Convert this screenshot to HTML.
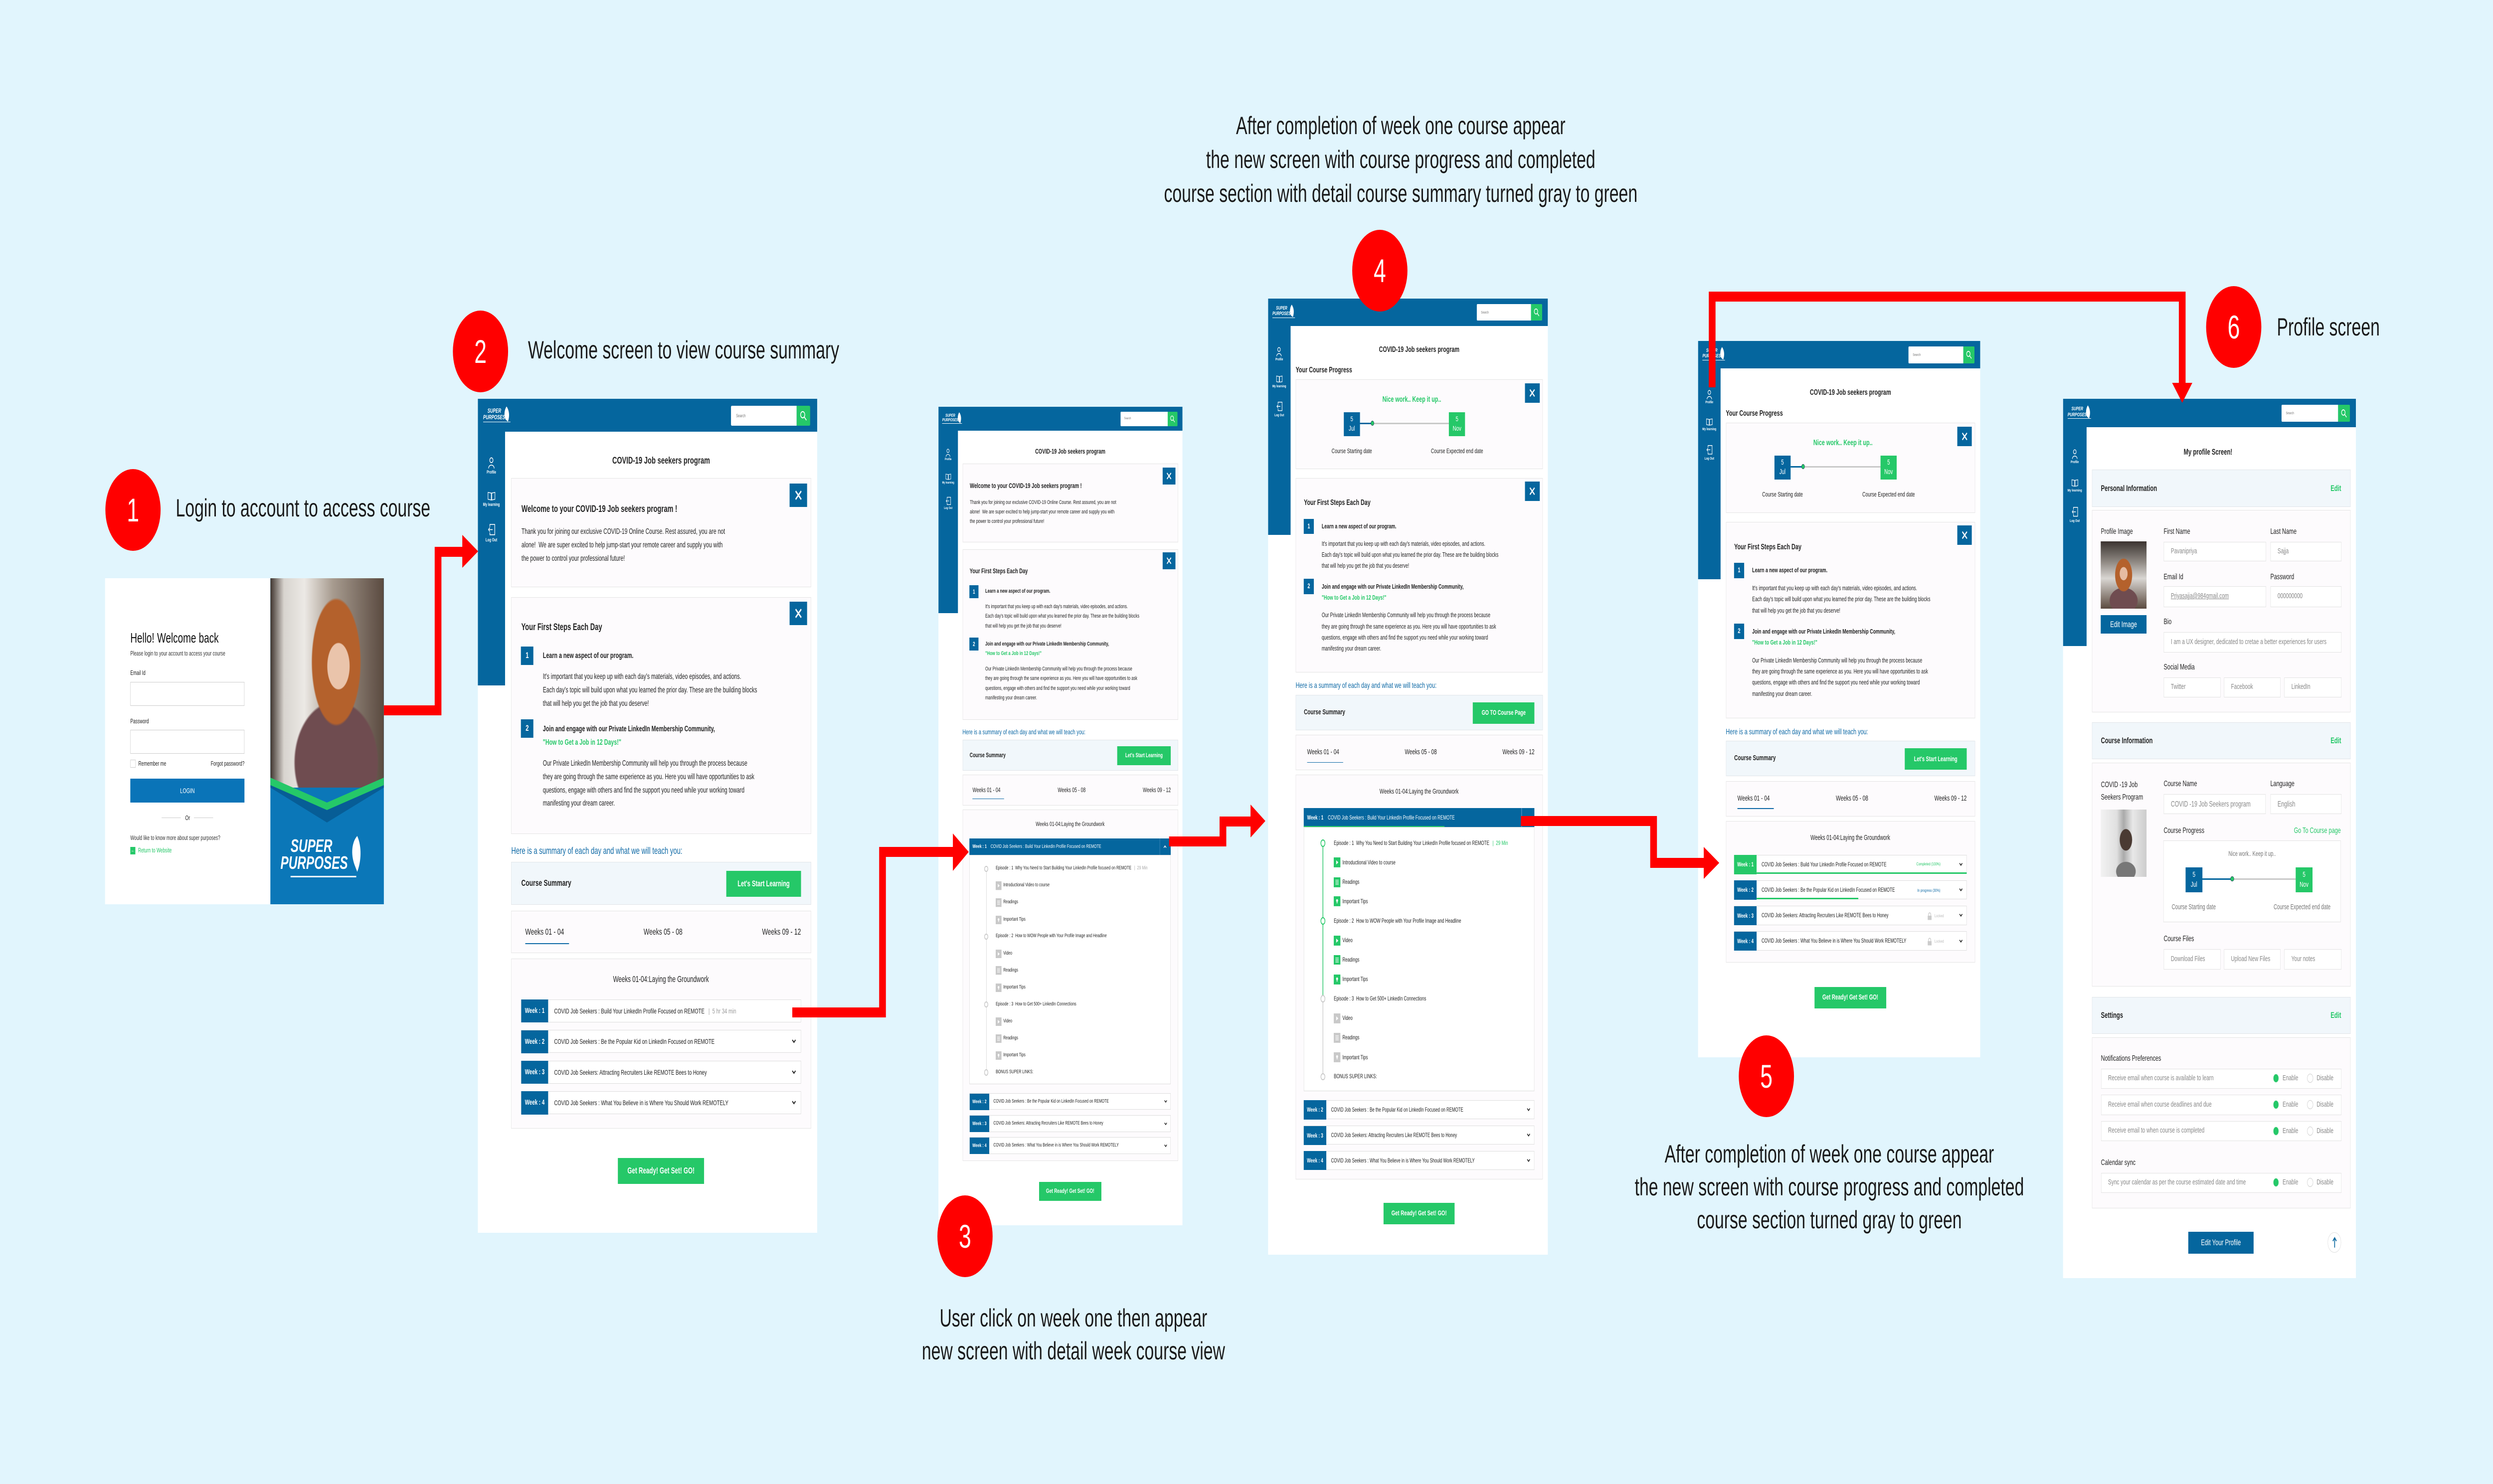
<!DOCTYPE html>
<html><head><meta charset="utf-8">
<style>
html,body{margin:0;padding:0;width:100%;height:100%;overflow:hidden;background:#e1f5fd}
body{font-family:"Liberation Sans",sans-serif;color:#222}
#wrap{position:absolute;left:0;top:0;width:7404px;height:2977px;overflow:hidden;background:#e1f5fd;transform-origin:0 0}
.a{position:absolute;white-space:nowrap}
.pos{position:absolute;overflow:hidden}
.scr{position:relative;width:1460px;background:#fff;overflow:hidden}
.hdr{position:absolute;left:0;top:0;width:1460px;height:96px;background:#05669e}
.side{position:absolute;left:0;top:96px;width:117px;height:737px;background:#05669e}
.lb{position:absolute;left:0;width:117px;text-align:center;color:#fff;font-size:13px;font-weight:bold}
.srch{position:absolute;left:1089px;top:20px;width:283px;height:58px;background:#fff;border-radius:4px 0 0 4px;font-size:13px;color:#777;line-height:58px;padding-left:22px;box-sizing:border-box}
.sbtn{position:absolute;left:1372px;top:20px;width:58px;height:58px;background:#25c868;border-radius:0 4px 4px 0}
.card{position:absolute;left:144px;width:1290px;border:2px solid #e4e4e4;background:#fdfbfd;box-sizing:border-box}
.bar{position:absolute;left:144px;width:1290px;border:2px solid #e0e4e8;background:#f1f7fb;box-sizing:border-box}
.x{position:absolute;left:1341px;width:76px;height:68px;background:#05669e}
.ttl{font-size:28px;font-weight:bold;line-height:40px;color:#222}
.h{font-size:23px;font-weight:bold;line-height:40px}
.p{font-size:22.5px;line-height:39px;color:#222}
.bx{position:absolute;left:186px;width:53px;height:53px;background:#05669e;color:#fff;font-size:24px;line-height:53px;text-align:center;font-weight:bold}
.gbtn{position:absolute;background:#25c868;color:#fff;font-weight:bold;text-align:center}
.bbtn{position:absolute;background:#05669e;color:#fff;text-align:center}
.row{position:absolute;left:186px;width:1204px;height:67px;background:#fff;border:1px solid #ddd;box-sizing:border-box}
.wl{position:absolute;left:-1px;top:-1px;width:117px;height:67px;background:#05669e;color:#fff;font-weight:bold;font-size:21px;line-height:67px;text-align:center}
.rt{position:absolute;left:141px;top:0;line-height:65px;font-size:20.5px;white-space:nowrap;color:#222}
.chev{position:absolute;left:1162px;top:25px}
.tab{font-size:26px;line-height:40px;color:#222}
.it{position:absolute;font-size:21px;line-height:30px;white-space:nowrap;color:#222}
.ic{position:absolute;left:343px}
.dot{position:absolute;left:274px;width:25px;height:25px;border-radius:50%;background:#fff;box-sizing:border-box}
.lbl{font-size:27px;line-height:36px;color:#222}
.inp{position:absolute;border:2px solid #e2e2e2;background:#fff;box-sizing:border-box;font-size:25px;color:#888;padding-left:34px;white-space:nowrap;overflow:hidden}
.ann{position:absolute;font-size:50px;line-height:60px;color:#1a1a1a;white-space:nowrap}
.circ{position:absolute;z-index:6;width:164px;height:164px;border-radius:50%;background:#ff0000;color:#fff;font-size:66px;line-height:164px;text-align:center}
</style></head><body><div id="wrap">

<div class="ann" style="left:522px;top:989px">Login to account to access course</div>
<div class="ann" style="left:1568px;top:672px">Welcome screen to view course summary</div>
<div class="ann" style="left:2588px;width:1200px;text-align:center;top:2614px">User click on week one then appear</div>
<div class="ann" style="left:2588px;width:1200px;text-align:center;top:2680px">new screen with detail week course view</div>
<div class="ann" style="left:3360px;width:1600px;text-align:center;top:222px">After completion of week one course appear</div>
<div class="ann" style="left:3360px;width:1600px;text-align:center;top:290px">the new screen with course progress and completed</div>
<div class="ann" style="left:3360px;width:1600px;text-align:center;top:358px">course section with detail course summary turned gray to green</div>
<div class="ann" style="left:4733px;width:1400px;text-align:center;top:2285px">After completion of week one course appear</div>
<div class="ann" style="left:4733px;width:1400px;text-align:center;top:2351px">the new screen with course progress and completed</div>
<div class="ann" style="left:4733px;width:1400px;text-align:center;top:2417px">course section turned gray to green</div>
<div class="ann" style="left:6762px;top:626px">Profile screen</div>

<!-- LOGIN CARD -->
<div class="a" style="left:312px;top:1160px;width:491px;height:654px;background:#fff"></div>
<div class="a" style="left:387px;top:1262px;font-size:28px;line-height:36px;color:#111">Hello! Welcome back</div>
<div class="a" style="left:387px;top:1303px;font-size:12.5px;line-height:16px;color:#333">Please login to your account to access your course</div>
<div class="a" style="left:387px;top:1342px;font-size:12.5px;line-height:16px;color:#222">Email Id</div>
<div class="a" style="left:387px;top:1368px;width:339px;height:48px;border:1px solid #ccc;box-sizing:border-box"></div>
<div class="a" style="left:387px;top:1439px;font-size:12.5px;line-height:16px;color:#222">Password</div>
<div class="a" style="left:387px;top:1464px;width:339px;height:48px;border:1px solid #ccc;box-sizing:border-box"></div>
<div class="a" style="left:387px;top:1524px;width:16px;height:16px;border:1px solid #ccc;box-sizing:border-box"></div>
<div class="a" style="left:411px;top:1524px;font-size:12.5px;line-height:16px">Remember me</div>
<div class="a" style="left:600px;width:126px;text-align:right;top:1524px;font-size:12.5px;line-height:16px">Forgot password?</div>
<div class="a" style="left:387px;top:1562px;width:339px;height:48px;background:#0a74b8;color:#fff;font-size:14px;line-height:48px;text-align:center">LOGIN</div>
<div class="a" style="left:480px;top:1640px;width:57px;height:1px;background:#ccc"></div>
<div class="a" style="left:576px;top:1640px;width:57px;height:1px;background:#ccc"></div>
<div class="a" style="left:550px;top:1633px;font-size:13px;line-height:16px">Or</div>
<div class="a" style="left:387px;top:1673px;font-size:12.5px;line-height:16px;color:#333">Would like to know more about super purposes?</div>
<div class="a" style="left:387px;top:1699px;width:15px;height:15px;background:#25c868;color:#fff;font-size:11px;line-height:15px;text-align:center">&#8592;</div>
<div class="a" style="left:410px;top:1698px;font-size:12.5px;line-height:16px;color:#25c868">Return to Website</div>
<div class="a" style="left:803px;top:1160px;width:337px;height:654px;overflow:hidden;background:#0b77b8">
 <div class="a" style="left:0;top:0;width:337px;height:420px;background:radial-gradient(ellipse 16% 18% at 60% 42%,#eac4ab 0 60%,transparent 63%),radial-gradient(ellipse 30% 42% at 58% 40%,#b4612c 0 70%,transparent 73%),radial-gradient(ellipse 48% 38% at 58% 88%,#6f4c50 0 75%,transparent 78%),linear-gradient(90deg,#3e342e,#d8d4cf 12%,#ece9e5 30%,#a79b8f 55%,#5a4a40 100%)"></div>
 <svg class="a" style="left:0;top:390px" width="337" height="100"><polygon points="0,30 168,100 337,30 337,0 337,10 168,75 0,10" fill="#075d96"/><polygon points="0,10 168,60 337,10 337,25 168,75 0,25" fill="#25c868"/></svg>
 <div class="a" style="left:30px;top:520px;color:#fff;font-weight:bold;font-size:36px;line-height:34px;font-style:italic">&nbsp;&nbsp;&nbsp;SUPER<br>PURPOSES</div>
 <svg class="a" style="left:228px;top:515px" width="50" height="80"><path d="M30 2 C14 14 10 38 22 60 L30 74 C42 52 44 24 30 2Z" fill="#fff"/></svg>
 <div class="a" style="left:60px;top:597px;width:195px;height:3px;background:#fff"></div>
</div>

<!-- ========== SCREEN 2 ========== -->
<div class="pos" style="left:1419px;top:800px;width:1008px;height:1673px">
<div class="scr" style="zoom:0.6904;height:2423px">
 <div class="hdr"></div>
 <div class="a" style="left:23px;top:26px;color:#fff;font:italic bold 17px/19px 'Liberation Sans',sans-serif">&nbsp;&nbsp;&nbsp;&nbsp;SUPER<br>PURPOSES</div>
 <svg class="a" style="left:106px;top:20px" width="34" height="48"><path d="M18 2 C8 12 6 30 14 40 L24 46 C32 30 30 14 18 2Z" fill="#fff"/></svg>
 <div class="a" style="left:23px;top:66px;width:117px;height:2px;background:#fff"></div>
 <div class="srch">Search</div><div class="sbtn"><svg width="58" height="58"><circle cx="26" cy="26" r="9" stroke="#fff" stroke-width="3" fill="none"/><path d="M33 33 L42 42" stroke="#fff" stroke-width="3"/></svg></div>
 <div class="side">
  <svg class="a" style="left:43px;top:74px" width="30" height="34"><circle cx="15" cy="9" r="7" stroke="#fff" stroke-width="2.5" fill="none"/><path d="M3 33 C3 20 27 20 27 33" stroke="#fff" stroke-width="2.5" fill="none"/></svg>
  <div class="lb" style="top:109px">Profile</div>
  <svg class="a" style="left:42px;top:172px" width="34" height="28"><path d="M2 4 L16 6 L16 26 L2 24Z M32 4 L18 6 L18 26 L32 24Z" stroke="#fff" stroke-width="2.2" fill="none"/></svg>
  <div class="lb" style="top:204px">My learning</div>
  <svg class="a" style="left:42px;top:266px" width="34" height="36"><path d="M10 10 V3 H31 V33 H10 V26" stroke="#fff" stroke-width="2.5" fill="none"/><path d="M22 18 H4 M10 12 L4 18 L10 24" stroke="#fff" stroke-width="2.5" fill="none"/></svg>
  <div class="lb" style="top:307px">Log Out</div>
 </div>
 <div class="a ttl" style="left:117px;width:1343px;text-align:center;top:161px">COVID-19 Job seekers program</div>
 <div class="card" style="top:230px;height:317px"></div>
 <div class="x" style="top:246px"><svg width="76" height="68"><path d="M26 22 L50 46 M50 22 L26 46" stroke="#fff" stroke-width="5"/></svg></div>
 <div class="a ttl" style="left:188px;top:301px">Welcome to your COVID-19 Job seekers program !</div>
 <div class="a p" style="left:188px;top:368px">Thank you for joining our exclusive COVID-19 Online Course. Rest assured, you are not<br>alone!&nbsp; We are super excited to help jump-start your remote career and supply you with<br>the power to control your professional future!</div>
 <div class="card" style="top:576px;height:689px"></div>
 <div class="x" style="top:589px"><svg width="76" height="68"><path d="M26 22 L50 46 M50 22 L26 46" stroke="#fff" stroke-width="5"/></svg></div>
 <div class="a ttl" style="left:187px;top:645px">Your First Steps Each Day</div>
 <div class="bx" style="top:720px">1</div>
 <div class="a h" style="left:280px;top:727px">Learn a new aspect of our program.</div>
 <div class="a p" style="left:280px;top:789px">It's important that you keep up with each day's materials, video episodes, and actions.<br>Each day's topic will build upon what you learned the prior day. These are the building blocks<br>that will help you get the job that you deserve!</div>
 <div class="bx" style="top:932px">2</div>
 <div class="a h" style="left:280px;top:940px">Join and engage with our Private LinkedIn Membership Community,</div>
 <div class="a h" style="left:280px;top:979px;color:#25c868">"How to Get a Job in 12 Days!"</div>
 <div class="a p" style="left:280px;top:1041px">Our Private LinkedIn Membership Community will help you through the process because<br>they are going through the same experience as you. Here you will have opportunities to ask<br>questions, engage with others and find the support you need while your working toward<br>manifesting your dream career.</div>
 <div class="a" style="left:144px;top:1295px;font-size:28px;line-height:40px;color:#0f6aa6">Here is a summary of each day and what we will teach you:</div>
 <div class="bar" style="top:1346px;height:124px"></div>
 <div class="a ttl" style="left:187px;top:1388px;font-size:26px">Course Summary</div>
 <div class="gbtn" style="left:1069px;top:1372px;width:321px;height:75px;line-height:75px;font-size:24px">Let's Start Learning</div>
 <div class="card" style="top:1487px;height:124px"></div>
 <div class="a tab" style="left:204px;top:1529px">Weeks 01 - 04</div>
 <div class="a" style="left:204px;top:1582px;width:188px;height:3px;background:#0f6aa6"></div>
 <div class="a tab" style="left:597px;width:400px;text-align:center;top:1529px">Weeks 05 - 08</div>
 <div class="a tab" style="left:1090px;width:300px;text-align:right;top:1529px">Weeks 09 - 12</div>
 <div class="card" style="top:1627px;height:494px"></div>
 <div class="a" style="left:288px;width:1000px;text-align:center;top:1669px;font-size:25px;line-height:36px">Weeks 01-04:Laying the Groundwork</div>
 <div class="row" style="top:1745px"><div class="wl">Week : 1</div><div class="rt">COVID Job Seekers : Build Your LinkedIn Profile Focused on REMOTE <span style="color:#999">&nbsp;&nbsp;|&nbsp;&nbsp;5 hr 34 min</span></div></div>
 <div class="row" style="top:1834px"><div class="wl">Week : 2</div><div class="rt">COVID Job Seekers : Be the Popular Kid on LinkedIn Focused on REMOTE</div><svg class="chev" width="20" height="14"><path d="M3 3 L10 10 L17 3" stroke="#222" stroke-width="3.5" fill="none"/></svg></div>
 <div class="row" style="top:1923px"><div class="wl">Week : 3</div><div class="rt">COVID Job Seekers: Attracting Recruiters Like REMOTE Bees to Honey</div><svg class="chev" width="20" height="14"><path d="M3 3 L10 10 L17 3" stroke="#222" stroke-width="3.5" fill="none"/></svg></div>
 <div class="row" style="top:2012px"><div class="wl">Week : 4</div><div class="rt">COVID Job Seekers : What You Believe in is Where You Should Work REMOTELY</div><svg class="chev" width="20" height="14"><path d="M3 3 L10 10 L17 3" stroke="#222" stroke-width="3.5" fill="none"/></svg></div>
 <div class="gbtn" style="left:602px;top:2206px;width:372px;height:75px;line-height:75px;font-size:25px">Get Ready! Get Set! GO!</div>
</div></div>

<!-- ========== SCREEN 3 ========== -->
<div class="pos" style="left:2787px;top:816px;width:725px;height:1642px">
<div class="scr" style="zoom:0.4966;height:3307px">
 <div class="hdr"></div>
 <div class="a" style="left:23px;top:26px;color:#fff;font:italic bold 17px/19px 'Liberation Sans',sans-serif">&nbsp;&nbsp;&nbsp;&nbsp;SUPER<br>PURPOSES</div>
 <svg class="a" style="left:106px;top:20px" width="34" height="48"><path d="M18 2 C8 12 6 30 14 40 L24 46 C32 30 30 14 18 2Z" fill="#fff"/></svg>
 <div class="a" style="left:23px;top:66px;width:117px;height:2px;background:#fff"></div>
 <div class="srch">Search</div><div class="sbtn"><svg width="58" height="58"><circle cx="26" cy="26" r="9" stroke="#fff" stroke-width="3" fill="none"/><path d="M33 33 L42 42" stroke="#fff" stroke-width="3"/></svg></div>
 <div class="side">
  <svg class="a" style="left:43px;top:74px" width="30" height="34"><circle cx="15" cy="9" r="7" stroke="#fff" stroke-width="2.5" fill="none"/><path d="M3 33 C3 20 27 20 27 33" stroke="#fff" stroke-width="2.5" fill="none"/></svg>
  <div class="lb" style="top:109px">Profile</div>
  <svg class="a" style="left:42px;top:172px" width="34" height="28"><path d="M2 4 L16 6 L16 26 L2 24Z M32 4 L18 6 L18 26 L32 24Z" stroke="#fff" stroke-width="2.2" fill="none"/></svg>
  <div class="lb" style="top:204px">My learning</div>
  <svg class="a" style="left:42px;top:266px" width="34" height="36"><path d="M10 10 V3 H31 V33 H10 V26" stroke="#fff" stroke-width="2.5" fill="none"/><path d="M22 18 H4 M10 12 L4 18 L10 24" stroke="#fff" stroke-width="2.5" fill="none"/></svg>
  <div class="lb" style="top:307px">Log Out</div>
 </div>
 <div class="a ttl" style="left:117px;width:1343px;text-align:center;top:161px">COVID-19 Job seekers program</div>
 <div class="card" style="top:230px;height:317px"></div>
 <div class="x" style="top:246px"><svg width="76" height="68"><path d="M26 22 L50 46 M50 22 L26 46" stroke="#fff" stroke-width="5"/></svg></div>
 <div class="a ttl" style="left:188px;top:301px">Welcome to your COVID-19 Job seekers program !</div>
 <div class="a p" style="left:188px;top:368px">Thank you for joining our exclusive COVID-19 Online Course. Rest assured, you are not<br>alone!&nbsp; We are super excited to help jump-start your remote career and supply you with<br>the power to control your professional future!</div>
 <div class="card" style="top:576px;height:689px"></div>
 <div class="x" style="top:589px"><svg width="76" height="68"><path d="M26 22 L50 46 M50 22 L26 46" stroke="#fff" stroke-width="5"/></svg></div>
 <div class="a ttl" style="left:187px;top:645px">Your First Steps Each Day</div>
 <div class="bx" style="top:720px">1</div>
 <div class="a h" style="left:280px;top:727px">Learn a new aspect of our program.</div>
 <div class="a p" style="left:280px;top:789px">It's important that you keep up with each day's materials, video episodes, and actions.<br>Each day's topic will build upon what you learned the prior day. These are the building blocks<br>that will help you get the job that you deserve!</div>
 <div class="bx" style="top:932px">2</div>
 <div class="a h" style="left:280px;top:940px">Join and engage with our Private LinkedIn Membership Community,</div>
 <div class="a h" style="left:280px;top:979px;color:#25c868">"How to Get a Job in 12 Days!"</div>
 <div class="a p" style="left:280px;top:1041px">Our Private LinkedIn Membership Community will help you through the process because<br>they are going through the same experience as you. Here you will have opportunities to ask<br>questions, engage with others and find the support you need while your working toward<br>manifesting your dream career.</div>
 <div class="a" style="left:144px;top:1295px;font-size:28px;line-height:40px;color:#0f6aa6">Here is a summary of each day and what we will teach you:</div>
 <div class="bar" style="top:1346px;height:124px"></div>
 <div class="a ttl" style="left:187px;top:1388px;font-size:26px">Course Summary</div>
 <div class="gbtn" style="left:1069px;top:1372px;width:321px;height:75px;line-height:75px;font-size:24px">Let's Start Learning</div>
 <div class="card" style="top:1487px;height:124px"></div>
 <div class="a tab" style="left:204px;top:1529px">Weeks 01 - 04</div>
 <div class="a" style="left:204px;top:1582px;width:188px;height:3px;background:#0f6aa6"></div>
 <div class="a tab" style="left:597px;width:400px;text-align:center;top:1529px">Weeks 05 - 08</div>
 <div class="a tab" style="left:1090px;width:300px;text-align:right;top:1529px">Weeks 09 - 12</div>
 <div class="card" style="top:1627px;height:1419px"></div>
 <div class="a" style="left:288px;width:1000px;text-align:center;top:1669px;font-size:25px;line-height:36px">Weeks 01-04:Laying the Groundwork</div>
 <div class="a" style="left:186px;top:1744px;width:1204px;height:67px;background:#05669e"></div>
 <div class="a" style="left:204px;top:1744px;line-height:67px;font-size:21px;color:#fff"><b>Week : 1</b>&nbsp;&nbsp;&nbsp;&nbsp;COVID Job Seekers : Build Your LinkedIn Profile Focused on REMOTE</div>
 <div class="a" style="left:1322px;top:1744px;width:2px;height:67px;background:#4d8fbf"></div>
 <svg class="a" style="left:1346px;top:1770px" width="20" height="14"><path d="M3 11 L10 4 L17 11" stroke="#fff" stroke-width="3.5" fill="none"/></svg>
 <div class="a" style="left:186px;top:1811px;width:1204px;height:926px;background:#fff;border:1px solid #ddd;box-sizing:border-box"></div>
 <div class="a" style="left:285px;top:1866px;width:3px;height:823px;background:#cfcfcf"></div>
 <div class="dot" style="top:1854px;border:5px solid #c9c9c9"></div>
 <div class="it" style="left:343px;top:1851px">Episode : 1&nbsp; Why You Need to Start Building Your LinkedIn Profile focused on REMOTE <span style="color:#aaa">&nbsp;&nbsp;|&nbsp;&nbsp;29 Min</span></div>
 <svg class="ic" style="top:1918px" width="35" height="35"><rect width="35" height="35" fill="#c9c9c9"/><path d="M13 10 L24 17.5 L13 25Z" fill="#fff"/></svg>
 <div class="it" style="left:388px;top:1920px">Introductional Video to course</div>
 <svg class="ic" style="top:1986px" width="35" height="35"><rect width="35" height="35" fill="#c9c9c9"/><path d="M9 10h17M9 15h17M9 20h17M9 25h17" stroke="#fff" stroke-width="2"/></svg>
 <div class="it" style="left:388px;top:1988px">Readings</div>
 <svg class="ic" style="top:2055px" width="35" height="35"><rect width="35" height="35" fill="#c9c9c9"/><circle cx="17.5" cy="15" r="5" fill="#fff"/><rect x="15.5" y="19" width="4" height="6" fill="#fff"/></svg>
 <div class="it" style="left:388px;top:2057px">Important Tips</div>
 <div class="dot" style="top:2128px;border:5px solid #c9c9c9"></div>
 <div class="it" style="left:343px;top:2125px">Episode : 2&nbsp; How to WOW People with Your Profile Image and Headline</div>
 <svg class="ic" style="top:2192px" width="35" height="35"><rect width="35" height="35" fill="#c9c9c9"/><path d="M13 10 L24 17.5 L13 25Z" fill="#fff"/></svg>
 <div class="it" style="left:388px;top:2194px">Video</div>
 <svg class="ic" style="top:2260px" width="35" height="35"><rect width="35" height="35" fill="#c9c9c9"/><path d="M9 10h17M9 15h17M9 20h17M9 25h17" stroke="#fff" stroke-width="2"/></svg>
 <div class="it" style="left:388px;top:2263px">Readings</div>
 <svg class="ic" style="top:2329px" width="35" height="35"><rect width="35" height="35" fill="#c9c9c9"/><circle cx="17.5" cy="15" r="5" fill="#fff"/><rect x="15.5" y="19" width="4" height="6" fill="#fff"/></svg>
 <div class="it" style="left:388px;top:2331px">Important Tips</div>
 <div class="dot" style="top:2402px;border:5px solid #c9c9c9"></div>
 <div class="it" style="left:343px;top:2400px">Episode : 3&nbsp; How to Get 500+ LinkedIn Connections</div>
 <svg class="ic" style="top:2466px" width="35" height="35"><rect width="35" height="35" fill="#c9c9c9"/><path d="M13 10 L24 17.5 L13 25Z" fill="#fff"/></svg>
 <div class="it" style="left:388px;top:2468px">Video</div>
 <svg class="ic" style="top:2535px" width="35" height="35"><rect width="35" height="35" fill="#c9c9c9"/><path d="M9 10h17M9 15h17M9 20h17M9 25h17" stroke="#fff" stroke-width="2"/></svg>
 <div class="it" style="left:388px;top:2537px">Readings</div>
 <svg class="ic" style="top:2603px" width="35" height="35"><rect width="35" height="35" fill="#c9c9c9"/><circle cx="17.5" cy="15" r="5" fill="#fff"/><rect x="15.5" y="19" width="4" height="6" fill="#fff"/></svg>
 <div class="it" style="left:388px;top:2606px">Important Tips</div>
 <div class="dot" style="top:2677px;border:5px solid #c9c9c9"></div>
 <div class="it" style="left:343px;top:2674px">BONUS SUPER LINKS:</div>
 <div class="row" style="top:2773px"><div class="wl">Week : 2</div><div class="rt">COVID Job Seekers : Be the Popular Kid on LinkedIn Focused on REMOTE</div><svg class="chev" width="20" height="14"><path d="M3 3 L10 10 L17 3" stroke="#222" stroke-width="3.5" fill="none"/></svg></div>
 <div class="row" style="top:2862px"><div class="wl">Week : 3</div><div class="rt">COVID Job Seekers: Attracting Recruiters Like REMOTE Bees to Honey</div><svg class="chev" width="20" height="14"><path d="M3 3 L10 10 L17 3" stroke="#222" stroke-width="3.5" fill="none"/></svg></div>
 <div class="row" style="top:2951px"><div class="wl">Week : 4</div><div class="rt">COVID Job Seekers : What You Believe in is Where You Should Work REMOTELY</div><svg class="chev" width="20" height="14"><path d="M3 3 L10 10 L17 3" stroke="#222" stroke-width="3.5" fill="none"/></svg></div>
 <div class="gbtn" style="left:602px;top:3132px;width:372px;height:75px;line-height:75px;font-size:25px">Get Ready! Get Set! GO!</div>
</div></div>

<!-- ========== SCREEN 4 ========== -->
<div class="pos" style="left:3766px;top:599px;width:831px;height:1918px">
<div class="scr" style="zoom:0.5692;height:3370px">
 <div class="hdr"></div>
 <div class="a" style="left:23px;top:26px;color:#fff;font:italic bold 17px/19px 'Liberation Sans',sans-serif">&nbsp;&nbsp;&nbsp;&nbsp;SUPER<br>PURPOSES</div>
 <svg class="a" style="left:106px;top:20px" width="34" height="48"><path d="M18 2 C8 12 6 30 14 40 L24 46 C32 30 30 14 18 2Z" fill="#fff"/></svg>
 <div class="a" style="left:23px;top:66px;width:117px;height:2px;background:#fff"></div>
 <div class="srch">Search</div><div class="sbtn"><svg width="58" height="58"><circle cx="26" cy="26" r="9" stroke="#fff" stroke-width="3" fill="none"/><path d="M33 33 L42 42" stroke="#fff" stroke-width="3"/></svg></div>
 <div class="side">
  <svg class="a" style="left:43px;top:74px" width="30" height="34"><circle cx="15" cy="9" r="7" stroke="#fff" stroke-width="2.5" fill="none"/><path d="M3 33 C3 20 27 20 27 33" stroke="#fff" stroke-width="2.5" fill="none"/></svg>
  <div class="lb" style="top:109px">Profile</div>
  <svg class="a" style="left:42px;top:172px" width="34" height="28"><path d="M2 4 L16 6 L16 26 L2 24Z M32 4 L18 6 L18 26 L32 24Z" stroke="#fff" stroke-width="2.2" fill="none"/></svg>
  <div class="lb" style="top:204px">My learning</div>
  <svg class="a" style="left:42px;top:266px" width="34" height="36"><path d="M10 10 V3 H31 V33 H10 V26" stroke="#fff" stroke-width="2.5" fill="none"/><path d="M22 18 H4 M10 12 L4 18 L10 24" stroke="#fff" stroke-width="2.5" fill="none"/></svg>
  <div class="lb" style="top:307px">Log Out</div>
 </div>
 <div class="a ttl" style="left:117px;width:1343px;text-align:center;top:161px">COVID-19 Job seekers program</div>
 <div class="a ttl" style="left:144px;top:233px">Your Course Progress</div>
 <div class="card" style="top:285px;height:316px"></div>
 <div class="x" style="top:299px"><svg width="76" height="68"><path d="M26 22 L50 46 M50 22 L26 46" stroke="#fff" stroke-width="5"/></svg></div>
 <div class="a" style="left:450px;width:600px;text-align:center;top:337px;font-size:28px;line-height:40px;font-weight:bold;color:#25c868">Nice work.. Keep it up..</div>
 <div class="a" style="left:479px;top:437px;width:465px;height:5px;background:#c9c9c9"></div>
 <div class="a" style="left:479px;top:437px;width:65px;height:5px;background:#05669e"></div>
 <div class="a" style="left:535px;top:430px;width:18px;height:18px;border-radius:50%;background:#25c868;border:2px solid #245;box-sizing:border-box"></div>
 <div class="a" style="left:395px;top:400px;width:84px;height:85px;background:#05669e;color:#fff;font-size:25px;line-height:33px;text-align:center;padding-top:10px;box-sizing:border-box">5<br>Jul</div>
 <div class="a" style="left:944px;top:400px;width:84px;height:85px;background:#25c868;color:#fff;font-size:25px;line-height:33px;text-align:center;padding-top:10px;box-sizing:border-box">5<br>Nov</div>
 <div class="a" style="left:237px;width:400px;text-align:center;top:521px;font-size:23px;line-height:30px">Course Starting date</div>
 <div class="a" style="left:786px;width:400px;text-align:center;top:521px;font-size:23px;line-height:30px">Course Expected end date</div>
 <div class="card" style="top:632px;height:686px"></div>
 <div class="x" style="top:645px"><svg width="76" height="68"><path d="M26 22 L50 46 M50 22 L26 46" stroke="#fff" stroke-width="5"/></svg></div>
 <div class="a ttl" style="left:187px;top:701px">Your First Steps Each Day</div>
 <div class="bx" style="top:776px">1</div>
 <div class="a h" style="left:280px;top:783px">Learn a new aspect of our program.</div>
 <div class="a p" style="left:280px;top:845px">It's important that you keep up with each day's materials, video episodes, and actions.<br>Each day's topic will build upon what you learned the prior day. These are the building blocks<br>that will help you get the job that you deserve!</div>
 <div class="bx" style="top:988px">2</div>
 <div class="a h" style="left:280px;top:996px">Join and engage with our Private LinkedIn Membership Community,</div>
 <div class="a h" style="left:280px;top:1035px;color:#25c868">"How to Get a Job in 12 Days!"</div>
 <div class="a p" style="left:280px;top:1097px">Our Private LinkedIn Membership Community will help you through the process because<br>they are going through the same experience as you. Here you will have opportunities to ask<br>questions, engage with others and find the support you need while your working toward<br>manifesting your dream career.</div>
 <div class="a" style="left:144px;top:1346px;font-size:28px;line-height:40px;color:#0f6aa6">Here is a summary of each day and what we will teach you:</div>
 <div class="bar" style="top:1397px;height:124px"></div>
 <div class="a ttl" style="left:187px;top:1439px;font-size:26px">Course Summary</div>
 <div class="gbtn" style="left:1069px;top:1423px;width:321px;height:75px;line-height:75px;font-size:24px">GO TO Course Page</div>
 <div class="card" style="top:1538px;height:124px"></div>
 <div class="a tab" style="left:204px;top:1580px">Weeks 01 - 04</div>
 <div class="a" style="left:204px;top:1633px;width:188px;height:3px;background:#0f6aa6"></div>
 <div class="a tab" style="left:597px;width:400px;text-align:center;top:1580px">Weeks 05 - 08</div>
 <div class="a tab" style="left:1090px;width:300px;text-align:right;top:1580px">Weeks 09 - 12</div>
 <div class="card" style="top:1678px;height:1426px"></div>
 <div class="a" style="left:288px;width:1000px;text-align:center;top:1720px;font-size:25px;line-height:36px">Weeks 01-04:Laying the Groundwork</div>
 <div class="a" style="left:186px;top:1796px;width:1204px;height:67px;background:#05669e"></div>
 <div class="a" style="left:186px;top:1859px;width:735px;height:4px;background:#25c868"></div>
 <div class="a" style="left:204px;top:1796px;line-height:67px;font-size:21px;color:#fff"><b>Week : 1</b>&nbsp;&nbsp;&nbsp;&nbsp;COVID Job Seekers : Build Your LinkedIn Profile Focused on REMOTE</div>
 <div class="a" style="left:1322px;top:1796px;width:2px;height:67px;background:#4d8fbf"></div>
 <div class="a" style="left:186px;top:1863px;width:1204px;height:930px;background:#fff;border:1px solid #ddd;box-sizing:border-box"></div>
 <div class="a" style="left:285px;top:1919px;width:3px;height:823px;background:#cfcfcf"></div>
 <div class="a" style="left:285px;top:1919px;width:3px;height:549px;background:#25c868"></div>
 <div class="dot" style="top:1907px;border:5px solid #25c868"></div>
 <div class="it" style="left:343px;top:1904px">Episode : 1&nbsp; Why You Need to Start Building Your LinkedIn Profile focused on REMOTE <span style="color:#25c868">&nbsp;&nbsp;|&nbsp;&nbsp;29 Min</span></div>
 <svg class="ic" style="top:1970px" width="35" height="35"><rect width="35" height="35" fill="#25c868"/><path d="M13 10 L24 17.5 L13 25Z" fill="#fff"/></svg>
 <div class="it" style="left:388px;top:1973px">Introductional Video to course</div>
 <svg class="ic" style="top:2039px" width="35" height="35"><rect width="35" height="35" fill="#25c868"/><path d="M9 10h17M9 15h17M9 20h17M9 25h17" stroke="#fff" stroke-width="2"/></svg>
 <div class="it" style="left:388px;top:2041px">Readings</div>
 <svg class="ic" style="top:2107px" width="35" height="35"><rect width="35" height="35" fill="#25c868"/><circle cx="17.5" cy="15" r="5" fill="#fff"/><rect x="15.5" y="19" width="4" height="6" fill="#fff"/></svg>
 <div class="it" style="left:388px;top:2110px">Important Tips</div>
 <div class="dot" style="top:2181px;border:5px solid #25c868"></div>
 <div class="it" style="left:343px;top:2178px">Episode : 2&nbsp; How to WOW People with Your Profile Image and Headline</div>
 <svg class="ic" style="top:2245px" width="35" height="35"><rect width="35" height="35" fill="#25c868"/><path d="M13 10 L24 17.5 L13 25Z" fill="#fff"/></svg>
 <div class="it" style="left:388px;top:2247px">Video</div>
 <svg class="ic" style="top:2313px" width="35" height="35"><rect width="35" height="35" fill="#25c868"/><path d="M9 10h17M9 15h17M9 20h17M9 25h17" stroke="#fff" stroke-width="2"/></svg>
 <div class="it" style="left:388px;top:2316px">Readings</div>
 <svg class="ic" style="top:2382px" width="35" height="35"><rect width="35" height="35" fill="#25c868"/><circle cx="17.5" cy="15" r="5" fill="#fff"/><rect x="15.5" y="19" width="4" height="6" fill="#fff"/></svg>
 <div class="it" style="left:388px;top:2384px">Important Tips</div>
 <div class="dot" style="top:2455px;border:5px solid #c9c9c9"></div>
 <div class="it" style="left:343px;top:2453px">Episode : 3&nbsp; How to Get 500+ LinkedIn Connections</div>
 <svg class="ic" style="top:2519px" width="35" height="35"><rect width="35" height="35" fill="#c9c9c9"/><path d="M13 10 L24 17.5 L13 25Z" fill="#fff"/></svg>
 <div class="it" style="left:388px;top:2521px">Video</div>
 <svg class="ic" style="top:2588px" width="35" height="35"><rect width="35" height="35" fill="#c9c9c9"/><path d="M9 10h17M9 15h17M9 20h17M9 25h17" stroke="#fff" stroke-width="2"/></svg>
 <div class="it" style="left:388px;top:2590px">Readings</div>
 <svg class="ic" style="top:2656px" width="35" height="35"><rect width="35" height="35" fill="#c9c9c9"/><circle cx="17.5" cy="15" r="5" fill="#fff"/><rect x="15.5" y="19" width="4" height="6" fill="#fff"/></svg>
 <div class="it" style="left:388px;top:2659px">Important Tips</div>
 <div class="dot" style="top:2730px;border:5px solid #c9c9c9"></div>
 <div class="it" style="left:343px;top:2727px">BONUS SUPER LINKS:</div>
 <div class="row" style="top:2825px"><div class="wl">Week : 2</div><div class="rt">COVID Job Seekers : Be the Popular Kid on LinkedIn Focused on REMOTE</div><svg class="chev" width="20" height="14"><path d="M3 3 L10 10 L17 3" stroke="#222" stroke-width="3.5" fill="none"/></svg></div>
 <div class="row" style="top:2915px"><div class="wl">Week : 3</div><div class="rt">COVID Job Seekers: Attracting Recruiters Like REMOTE Bees to Honey</div><svg class="chev" width="20" height="14"><path d="M3 3 L10 10 L17 3" stroke="#222" stroke-width="3.5" fill="none"/></svg></div>
 <div class="row" style="top:3004px"><div class="wl">Week : 4</div><div class="rt">COVID Job Seekers : What You Believe in is Where You Should Work REMOTELY</div><svg class="chev" width="20" height="14"><path d="M3 3 L10 10 L17 3" stroke="#222" stroke-width="3.5" fill="none"/></svg></div>
 <div class="gbtn" style="left:602px;top:3187px;width:372px;height:75px;line-height:75px;font-size:25px">Get Ready! Get Set! GO!</div>
</div></div>

<!-- ========== SCREEN 5 ========== -->
<div class="pos" style="left:5043px;top:684px;width:838px;height:1437px">
<div class="scr" style="zoom:0.574;height:2503px">
 <div class="hdr"></div>
 <div class="a" style="left:23px;top:26px;color:#fff;font:italic bold 17px/19px 'Liberation Sans',sans-serif">&nbsp;&nbsp;&nbsp;&nbsp;SUPER<br>PURPOSES</div>
 <svg class="a" style="left:106px;top:20px" width="34" height="48"><path d="M18 2 C8 12 6 30 14 40 L24 46 C32 30 30 14 18 2Z" fill="#fff"/></svg>
 <div class="a" style="left:23px;top:66px;width:117px;height:2px;background:#fff"></div>
 <div class="srch">Search</div><div class="sbtn"><svg width="58" height="58"><circle cx="26" cy="26" r="9" stroke="#fff" stroke-width="3" fill="none"/><path d="M33 33 L42 42" stroke="#fff" stroke-width="3"/></svg></div>
 <div class="side">
  <svg class="a" style="left:43px;top:74px" width="30" height="34"><circle cx="15" cy="9" r="7" stroke="#fff" stroke-width="2.5" fill="none"/><path d="M3 33 C3 20 27 20 27 33" stroke="#fff" stroke-width="2.5" fill="none"/></svg>
  <div class="lb" style="top:109px">Profile</div>
  <svg class="a" style="left:42px;top:172px" width="34" height="28"><path d="M2 4 L16 6 L16 26 L2 24Z M32 4 L18 6 L18 26 L32 24Z" stroke="#fff" stroke-width="2.2" fill="none"/></svg>
  <div class="lb" style="top:204px">My learning</div>
  <svg class="a" style="left:42px;top:266px" width="34" height="36"><path d="M10 10 V3 H31 V33 H10 V26" stroke="#fff" stroke-width="2.5" fill="none"/><path d="M22 18 H4 M10 12 L4 18 L10 24" stroke="#fff" stroke-width="2.5" fill="none"/></svg>
  <div class="lb" style="top:307px">Log Out</div>
 </div>
 <div class="a ttl" style="left:117px;width:1343px;text-align:center;top:161px">COVID-19 Job seekers program</div>
 <div class="a ttl" style="left:144px;top:233px">Your Course Progress</div>
 <div class="card" style="top:285px;height:316px"></div>
 <div class="x" style="top:299px"><svg width="76" height="68"><path d="M26 22 L50 46 M50 22 L26 46" stroke="#fff" stroke-width="5"/></svg></div>
 <div class="a" style="left:450px;width:600px;text-align:center;top:337px;font-size:28px;line-height:40px;font-weight:bold;color:#25c868">Nice work.. Keep it up..</div>
 <div class="a" style="left:479px;top:437px;width:465px;height:5px;background:#c9c9c9"></div>
 <div class="a" style="left:479px;top:437px;width:65px;height:5px;background:#05669e"></div>
 <div class="a" style="left:535px;top:430px;width:18px;height:18px;border-radius:50%;background:#25c868;border:2px solid #245;box-sizing:border-box"></div>
 <div class="a" style="left:395px;top:400px;width:84px;height:85px;background:#05669e;color:#fff;font-size:25px;line-height:33px;text-align:center;padding-top:10px;box-sizing:border-box">5<br>Jul</div>
 <div class="a" style="left:944px;top:400px;width:84px;height:85px;background:#25c868;color:#fff;font-size:25px;line-height:33px;text-align:center;padding-top:10px;box-sizing:border-box">5<br>Nov</div>
 <div class="a" style="left:237px;width:400px;text-align:center;top:521px;font-size:23px;line-height:30px">Course Starting date</div>
 <div class="a" style="left:786px;width:400px;text-align:center;top:521px;font-size:23px;line-height:30px">Course Expected end date</div>
 <div class="card" style="top:632px;height:686px"></div>
 <div class="x" style="top:645px"><svg width="76" height="68"><path d="M26 22 L50 46 M50 22 L26 46" stroke="#fff" stroke-width="5"/></svg></div>
 <div class="a ttl" style="left:187px;top:701px">Your First Steps Each Day</div>
 <div class="bx" style="top:776px">1</div>
 <div class="a h" style="left:280px;top:783px">Learn a new aspect of our program.</div>
 <div class="a p" style="left:280px;top:845px">It's important that you keep up with each day's materials, video episodes, and actions.<br>Each day's topic will build upon what you learned the prior day. These are the building blocks<br>that will help you get the job that you deserve!</div>
 <div class="bx" style="top:988px">2</div>
 <div class="a h" style="left:280px;top:996px">Join and engage with our Private LinkedIn Membership Community,</div>
 <div class="a h" style="left:280px;top:1035px;color:#25c868">"How to Get a Job in 12 Days!"</div>
 <div class="a p" style="left:280px;top:1097px">Our Private LinkedIn Membership Community will help you through the process because<br>they are going through the same experience as you. Here you will have opportunities to ask<br>questions, engage with others and find the support you need while your working toward<br>manifesting your dream career.</div>
 <div class="a" style="left:144px;top:1346px;font-size:28px;line-height:40px;color:#0f6aa6">Here is a summary of each day and what we will teach you:</div>
 <div class="bar" style="top:1397px;height:124px"></div>
 <div class="a ttl" style="left:187px;top:1439px;font-size:26px">Course Summary</div>
 <div class="gbtn" style="left:1069px;top:1423px;width:321px;height:75px;line-height:75px;font-size:24px">Let's Start Learning</div>
 <div class="card" style="top:1538px;height:124px"></div>
 <div class="a tab" style="left:204px;top:1580px">Weeks 01 - 04</div>
 <div class="a" style="left:204px;top:1633px;width:188px;height:3px;background:#0f6aa6"></div>
 <div class="a tab" style="left:597px;width:400px;text-align:center;top:1580px">Weeks 05 - 08</div>
 <div class="a tab" style="left:1090px;width:300px;text-align:right;top:1580px">Weeks 09 - 12</div>
 <div class="card" style="top:1678px;height:494px"></div>
 <div class="a" style="left:288px;width:1000px;text-align:center;top:1720px;font-size:25px;line-height:36px">Weeks 01-04:Laying the Groundwork</div>
 <div class="row" style="top:1796px"><div class="wl" style="background:#25c868">Week : 1</div><div class="rt">COVID Job Seekers : Build Your LinkedIn Profile Focused on REMOTE</div><div class="a" style="left:942px;top:20px;font-size:15px;line-height:22px;color:#25c868">Completed (100%)</div><div class="a" style="left:116px;top:60px;width:1087px;height:5px;background:#25c868"></div><svg class="chev" width="20" height="14"><path d="M3 3 L10 10 L17 3" stroke="#222" stroke-width="3.5" fill="none"/></svg></div>
 <div class="row" style="top:1885px"><div class="wl">Week : 2</div><div class="rt">COVID Job Seekers : Be the Popular Kid on LinkedIn Focused on REMOTE</div><div class="a" style="left:947px;top:22px;font-size:15px;line-height:22px;color:#0f6aa6">In progress (30%)</div><div class="a" style="left:116px;top:60px;width:525px;height:4px;background:#25c868"></div><svg class="chev" width="20" height="14"><path d="M3 3 L10 10 L17 3" stroke="#222" stroke-width="3.5" fill="none"/></svg></div>
 <div class="row" style="top:1974px"><div class="wl">Week : 3</div><div class="rt">COVID Job Seekers: Attracting Recruiters Like REMOTE Bees to Honey</div><svg class="a" style="left:998px;top:20px" width="24" height="28"><path d="M6 12 V8 a6 6 0 0 1 12 0 V12" stroke="#ccc" stroke-width="3" fill="none"/><rect x="2" y="12" width="20" height="15" fill="#ccc"/></svg><div class="a" style="left:1036px;top:23px;font-size:15px;line-height:22px;color:#bbb">Locked</div><svg class="chev" width="20" height="14"><path d="M3 3 L10 10 L17 3" stroke="#222" stroke-width="3.5" fill="none"/></svg></div>
 <div class="row" style="top:2063px"><div class="wl">Week : 4</div><div class="rt">COVID Job Seekers : What You Believe in is Where You Should Work REMOTELY</div><svg class="a" style="left:998px;top:20px" width="24" height="28"><path d="M6 12 V8 a6 6 0 0 1 12 0 V12" stroke="#ccc" stroke-width="3" fill="none"/><rect x="2" y="12" width="20" height="15" fill="#ccc"/></svg><div class="a" style="left:1036px;top:23px;font-size:15px;line-height:22px;color:#bbb">Locked</div><svg class="chev" width="20" height="14"><path d="M3 3 L10 10 L17 3" stroke="#222" stroke-width="3.5" fill="none"/></svg></div>
 <div class="gbtn" style="left:602px;top:2257px;width:372px;height:75px;line-height:75px;font-size:25px">Get Ready! Get Set! GO!</div>
</div></div>

<!-- ========== SCREEN 6 ========== -->
<div class="pos" style="left:6127px;top:800px;width:870px;height:1764px">
<div class="scr" style="zoom:0.5956;height:2961px">
 <div class="hdr"></div>
 <div class="a" style="left:23px;top:26px;color:#fff;font:italic bold 17px/19px 'Liberation Sans',sans-serif">&nbsp;&nbsp;&nbsp;&nbsp;SUPER<br>PURPOSES</div>
 <svg class="a" style="left:106px;top:20px" width="34" height="48"><path d="M18 2 C8 12 6 30 14 40 L24 46 C32 30 30 14 18 2Z" fill="#fff"/></svg>
 <div class="a" style="left:23px;top:66px;width:117px;height:2px;background:#fff"></div>
 <div class="srch">Search</div><div class="sbtn"><svg width="58" height="58"><circle cx="26" cy="26" r="9" stroke="#fff" stroke-width="3" fill="none"/><path d="M33 33 L42 42" stroke="#fff" stroke-width="3"/></svg></div>
 <div class="side">
  <svg class="a" style="left:43px;top:74px" width="30" height="34"><circle cx="15" cy="9" r="7" stroke="#fff" stroke-width="2.5" fill="none"/><path d="M3 33 C3 20 27 20 27 33" stroke="#fff" stroke-width="2.5" fill="none"/></svg>
  <div class="lb" style="top:109px">Profile</div>
  <svg class="a" style="left:42px;top:172px" width="34" height="28"><path d="M2 4 L16 6 L16 26 L2 24Z M32 4 L18 6 L18 26 L32 24Z" stroke="#fff" stroke-width="2.2" fill="none"/></svg>
  <div class="lb" style="top:204px">My learning</div>
  <svg class="a" style="left:42px;top:266px" width="34" height="36"><path d="M10 10 V3 H31 V33 H10 V26" stroke="#fff" stroke-width="2.5" fill="none"/><path d="M22 18 H4 M10 12 L4 18 L10 24" stroke="#fff" stroke-width="2.5" fill="none"/></svg>
  <div class="lb" style="top:307px">Log Out</div>
 </div>
 <div class="a ttl" style="left:523px;width:400px;text-align:center;top:160px">My profile Screen!</div>
 <div class="bar" style="top:239px;height:125px"></div>
 <div class="a ttl" style="left:189px;top:282px">Personal Information</div>
 <div class="a ttl" style="left:1287px;width:100px;text-align:right;top:282px;color:#25c868">Edit</div>
 <div class="card" style="top:375px;height:681px"></div>
 <div class="a lbl" style="left:189px;top:430px">Profile Image</div>
 <div class="a" style="left:188px;top:481px;width:228px;height:226px;background:radial-gradient(ellipse 14% 16% at 50% 48%,#e6bca2 0 60%,transparent 63%),radial-gradient(ellipse 26% 34% at 50% 50%,#b4612c 0 70%,transparent 73%),radial-gradient(ellipse 40% 25% at 50% 88%,#6f4c50 0 75%,transparent 78%),linear-gradient(180deg,#3b3430,#8d8781 30%,#d9d6d2 55%,#5b4a3f)"></div>
 <div class="bbtn" style="left:188px;top:728px;width:228px;height:63px;line-height:63px;font-size:28px">Edit Image</div>
 <div class="a lbl" style="left:502px;top:430px">First Name</div>
 <div class="inp" style="left:502px;top:482px;width:510px;height:66px;line-height:62px">Pavanipriya</div>
 <div class="a lbl" style="left:1034px;top:430px">Last Name</div>
 <div class="inp" style="left:1034px;top:482px;width:354px;height:66px;line-height:62px">Sajja</div>
 <div class="a lbl" style="left:502px;top:582px">Email Id</div>
 <div class="inp" style="left:502px;top:632px;width:510px;height:69px;line-height:65px;text-decoration:underline">Priyasajja@984gmail.com</div>
 <div class="a lbl" style="left:1034px;top:582px">Password</div>
 <div class="inp" style="left:1034px;top:632px;width:354px;height:69px;line-height:65px">000000000</div>
 <div class="a lbl" style="left:502px;top:734px">Bio</div>
 <div class="inp" style="left:502px;top:785px;width:886px;height:69px;line-height:65px">I am a UX designer, dedicated to cretae a better experiences for users</div>
 <div class="a lbl" style="left:502px;top:886px">Social Media</div>
 <div class="inp" style="left:502px;top:938px;width:283px;height:67px;line-height:63px">Twitter</div>
 <div class="inp" style="left:802px;top:938px;width:283px;height:67px;line-height:63px">Facebook</div>
 <div class="inp" style="left:1103px;top:938px;width:285px;height:67px;line-height:63px">LinkedIn</div>
 <div class="bar" style="top:1090px;height:124px"></div>
 <div class="a ttl" style="left:189px;top:1132px">Course Information</div>
 <div class="a ttl" style="left:1287px;width:100px;text-align:right;top:1132px;color:#25c868">Edit</div>
 <div class="card" style="top:1225px;height:755px"></div>
 <div class="a lbl" style="left:189px;top:1280px;line-height:42px">COVID -19 Job<br>Seekers Program</div>
 <div class="a" style="left:188px;top:1384px;width:228px;height:227px;background:radial-gradient(ellipse 22% 26% at 55% 45%,#4a3a32 0 60%,transparent 63%),radial-gradient(ellipse 30% 20% at 55% 92%,#777 0 70%,transparent 73%),linear-gradient(90deg,#f2f2f2,#e0e0e0 35%,#aaa 50%,#e8e8e8 70%,#ccc)"></div>
 <div class="a lbl" style="left:502px;top:1280px">Course Name</div>
 <div class="inp" style="left:502px;top:1331px;width:508px;height:68px;line-height:64px;font-size:27px">COVID -19 Job Seekers program</div>
 <div class="a lbl" style="left:1034px;top:1280px">Language</div>
 <div class="inp" style="left:1034px;top:1331px;width:354px;height:68px;line-height:64px;font-size:27px">English</div>
 <div class="a lbl" style="left:502px;top:1438px">Course Progress</div>
 <div class="a lbl" style="left:1085px;width:300px;text-align:right;top:1438px;color:#25c868">Go To Course page</div>
 <div class="a" style="left:501px;top:1488px;width:885px;height:275px;border:2px solid #e2e2e2;box-sizing:border-box;background:#fff"></div>
 <div class="a" style="left:743px;width:400px;text-align:center;top:1518px;font-size:23px;line-height:30px;color:#777">Nice work.. Keep it up..</div>
 <div class="a" style="left:694px;top:1615px;width:466px;height:5px;background:#c9c9c9"></div>
 <div class="a" style="left:694px;top:1615px;width:150px;height:5px;background:#05669e"></div>
 <div class="a" style="left:835px;top:1608px;width:18px;height:18px;border-radius:50%;background:#25c868;border:2px solid #245;box-sizing:border-box"></div>
 <div class="a" style="left:611px;top:1579px;width:84px;height:84px;background:#05669e;color:#fff;font-size:25px;line-height:33px;text-align:center;padding-top:10px;box-sizing:border-box">5<br>Jul</div>
 <div class="a" style="left:1160px;top:1579px;width:84px;height:84px;background:#25c868;color:#fff;font-size:25px;line-height:33px;text-align:center;padding-top:10px;box-sizing:border-box">5<br>Nov</div>
 <div class="a" style="left:452px;width:400px;text-align:center;top:1699px;font-size:24px;line-height:30px;color:#777">Course Starting date</div>
 <div class="a" style="left:1002px;width:380px;text-align:center;top:1699px;font-size:24px;line-height:30px;color:#777">Course Expected end date</div>
 <div class="a lbl" style="left:502px;top:1802px">Course Files</div>
 <div class="inp" style="left:502px;top:1853px;width:283px;height:69px;line-height:65px">Download Files</div>
 <div class="inp" style="left:802px;top:1853px;width:283px;height:69px;line-height:65px">Upload New Files</div>
 <div class="inp" style="left:1103px;top:1853px;width:285px;height:69px;line-height:65px">Your notes</div>
 <div class="bar" style="top:2015px;height:124px"></div>
 <div class="a ttl" style="left:189px;top:2057px">Settings</div>
 <div class="a ttl" style="left:1287px;width:100px;text-align:right;top:2057px;color:#25c868">Edit</div>
 <div class="card" style="top:2150px;height:576px"></div>
 <div class="a lbl" style="left:189px;top:2204px">Notifications Preferences</div>
 <div class="inp" style="left:189px;top:2256px;width:1199px;height:67px;line-height:63px">Receive email when course is available to learn</div>
 <div class="inp" style="left:189px;top:2344px;width:1199px;height:68px;line-height:64px">Receive email when course deadlines and due</div>
 <div class="inp" style="left:189px;top:2433px;width:1199px;height:67px;line-height:63px">Receive email to when course is completed</div>
 <div class="a lbl" style="left:189px;top:2556px">Calendar sync</div>
 <div class="inp" style="left:189px;top:2607px;width:1199px;height:67px;line-height:63px">Sync your calendar as per the course estimated date and time</div>
 <div class="a" style="left:1047px;top:2274px;width:30px;height:30px;border-radius:50%;background:#25c868;border:2px solid #dff5e8;box-sizing:border-box"></div>
 <div class="a" style="left:1095px;top:2272px;font-size:25px;line-height:34px;color:#888">Enable</div>
 <div class="a" style="left:1218px;top:2274px;width:30px;height:30px;border-radius:50%;border:2px solid #ccc;box-sizing:border-box"></div>
 <div class="a" style="left:1265px;top:2272px;font-size:25px;line-height:34px;color:#888">Disable</div>
 <div class="a" style="left:1047px;top:2363px;width:30px;height:30px;border-radius:50%;background:#25c868;border:2px solid #dff5e8;box-sizing:border-box"></div>
 <div class="a" style="left:1095px;top:2361px;font-size:25px;line-height:34px;color:#888">Enable</div>
 <div class="a" style="left:1218px;top:2363px;width:30px;height:30px;border-radius:50%;border:2px solid #ccc;box-sizing:border-box"></div>
 <div class="a" style="left:1265px;top:2361px;font-size:25px;line-height:34px;color:#888">Disable</div>
 <div class="a" style="left:1047px;top:2451px;width:30px;height:30px;border-radius:50%;background:#25c868;border:2px solid #dff5e8;box-sizing:border-box"></div>
 <div class="a" style="left:1095px;top:2449px;font-size:25px;line-height:34px;color:#888">Enable</div>
 <div class="a" style="left:1218px;top:2451px;width:30px;height:30px;border-radius:50%;border:2px solid #ccc;box-sizing:border-box"></div>
 <div class="a" style="left:1265px;top:2449px;font-size:25px;line-height:34px;color:#888">Disable</div>
 <div class="a" style="left:1047px;top:2625px;width:30px;height:30px;border-radius:50%;background:#25c868;border:2px solid #dff5e8;box-sizing:border-box"></div>
 <div class="a" style="left:1095px;top:2623px;font-size:25px;line-height:34px;color:#888">Enable</div>
 <div class="a" style="left:1218px;top:2625px;width:30px;height:30px;border-radius:50%;border:2px solid #ccc;box-sizing:border-box"></div>
 <div class="a" style="left:1265px;top:2623px;font-size:25px;line-height:34px;color:#888">Disable</div>
 <div class="bbtn" style="left:624px;top:2806px;width:327px;height:74px;line-height:74px;font-size:28px">Edit Your Profile</div>
 <div class="a" style="left:1319px;top:2808px;width:68px;height:68px;border-radius:50%;border:1px solid #ddd;box-sizing:border-box;background:#fff"><svg width="66" height="66"><path d="M33 50 V18 M24 28 L33 17 L42 28" stroke="#05669e" stroke-width="4" fill="none"/></svg></div>
</div></div>

<!-- ARROWS -->
<svg class="a" style="left:0;top:0;z-index:5" width="7404" height="2977">
 <g fill="none" stroke="#ff0000" stroke-width="20" stroke-linejoin="miter">
  <polyline points="1140,1425 1301,1425 1301,1107 1378,1107"/>
  <polyline points="2353,2031 2621,2031 2621,1709 2834,1709"/>
  <polyline points="3472,1688 3632,1688 3632,1648 3718,1648"/>
  <polyline points="4517,1647 4911,1647 4911,1731 5064,1731"/>
  <polyline points="5085,777 5085,595 6481,595 6481,772"/>
 </g>
 <g fill="#ff0000">
  <polygon points="1373,1073 1420,1106 1373,1139"/>
  <polygon points="2830,1672 2877,1709 2830,1747"/>
  <polygon points="3714,1614 3758,1647 3714,1680"/>
  <polygon points="5060,1699 5106,1731 5060,1763"/>
  <polygon points="6451,768 6511,768 6481,808"/>
 </g>
</svg>

<div class="circ" style="left:313px;top:941px">1</div>
<div class="circ" style="left:1345px;top:623px">2</div>
<div class="circ" style="left:2784px;top:2398px">3</div>
<div class="circ" style="left:4016px;top:461px">4</div>
<div class="circ" style="left:5164px;top:2077px">5</div>
<div class="circ" style="left:6552px;top:574px">6</div>

</div>
<script>
(function(){
 function fit(){
  var w=document.documentElement.clientWidth||window.innerWidth;
  var h=document.documentElement.clientHeight||window.innerHeight;
  var sx=w/7404, sy=h/2977;
  var el=document.getElementById('wrap');
  if(Math.abs(sx-1)>0.002||Math.abs(sy-1)>0.002){el.style.transform='scale('+sx+','+sy+')';}
  else{el.style.transform='none';}
 }
 fit(); window.addEventListener('resize',fit);
})();
</script>
</body></html>
